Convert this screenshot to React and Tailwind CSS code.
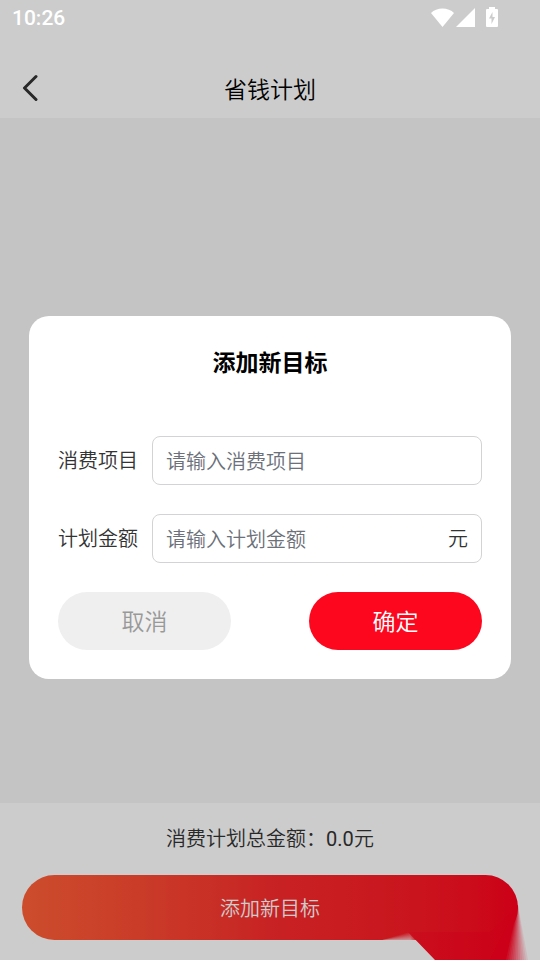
const SANS = "font-['Noto_Sans_CJK_SC',sans-serif]";

function StatusBar() {
  return (
    <div className="relative z-20 flex h-[38px] items-center justify-between pl-3 pr-10 text-white">
      <span className="font-[Roboto] text-[21px] font-medium">10:26</span>
      <svg className="h-6 w-[70px]" viewBox="0 0 70 24" fill="currentColor" aria-hidden="true">
        <path d="M1 6C6.500 0 18.500 0 24 6L12.500 20Z" />
        <path d="M26 20L45 1V20Z" />
        <path
          fillRule="evenodd"
          d="M59 0h6v2h2a1 1 0 0 1 1 1v16a1 1 0 0 1-1 1H57a1 1 0 0 1-1-1V3a1 1 0 0 1 1-1h2ZM62.500 5L59 11.500h2.500v5.500L65 10h-2.500Z"
        />
      </svg>
    </div>
  );
}

function Field({ id, label, placeholder, unit }) {
  return (
    <div className="flex items-center gap-[14px]">
      <label htmlFor={id} className="shrink-0 text-xl text-[#333333]">
        {label}
      </label>
      <div className="flex h-[49px] min-w-0 flex-1 items-center rounded-lg border border-[#d3d3d5] px-[13px]">
        <input
          id={id}
          type="text"
          placeholder={placeholder}
          className="h-full min-w-0 flex-1 bg-transparent text-xl text-[#333333] outline-none placeholder:text-[#6b7079]"
        />
        {unit && <span className="text-xl text-[#333333]">{unit}</span>}
      </div>
    </div>
  );
}

function AddGoalDialog() {
  return (
    <div className="absolute inset-0 z-10 flex items-center justify-center bg-black/20 px-[29px] pt-[34px]">
      <form
        role="dialog"
        aria-labelledby="dialog-title"
        className="w-full rounded-[20px] bg-white p-[29px]"
        onSubmit={(event) => event.preventDefault()}
      >
        <h2 id="dialog-title" className="text-center text-[23px] leading-8 font-bold text-black">
          添加新目标
        </h2>
        <div className="mt-[59px] flex flex-col gap-[29px]">
          <Field id="item" label="消费项目" placeholder="请输入消费项目" />
          <Field id="amount" label="计划金额" placeholder="请输入计划金额" unit="元" />
          <div className="flex justify-between">
            <button type="button" className="h-[58px] w-[173px] rounded-full bg-[#efefef] text-[23px] text-[#999999]">
              取消
            </button>
            <button type="submit" className="h-[58px] w-[173px] rounded-full bg-[#fd071e] text-[23px] text-white">
              确定
            </button>
          </div>
        </div>
      </form>
    </div>
  );
}

const STEPS = Array.from({ length: 12 }, (_, i) => i);

function RibbonTail() {
  return (
    <svg className="absolute right-0 bottom-0 h-[60px] w-40" viewBox="0 0 160 60" aria-hidden="true">
      <defs>
        <linearGradient id="tail" gradientUnits="userSpaceOnUse" x1="30" y1="0" x2="138" y2="0">
          <stop offset="0" stopColor="#fd1325" />
          <stop offset="1" stopColor="#ff001e" />
        </linearGradient>
      </defs>
      {STEPS.map((i) => (
        <path key={i} d={`M2 40L30 ${32 + i}L44 50L30 50Z`} fill="#ffffff" fillOpacity={1 / (12 - i)} />
      ))}
      <path d="M28 32H110L138 5L124 60H55Z" fill="url(#tail)" />
      {STEPS.map((i) => (
        <path key={i} d={`M138 5L${148 - i * 2} 60H110Z`} fill="#ff0220" fillOpacity={1 / (12 - i)} />
      ))}
    </svg>
  );
}

export default function App() {
  return (
    <div className={`relative flex min-h-screen flex-col bg-[#f6f6f6] font-[350] ${SANS}`}>
      <header className="bg-white">
        <StatusBar />
        <div className="grid h-20 grid-cols-[60px_1fr_60px] items-center pt-5">
          <button type="button" aria-label="返回" className="flex h-full items-center pl-[22px] text-[#333333]">
            <svg className="h-7 w-4" viewBox="0 0 16 28" fill="none" stroke="currentColor" strokeWidth="3" aria-hidden="true">
              <path d="M14 2.500L2.500 14L14 25.500" strokeLinecap="round" strokeLinejoin="round" />
            </svg>
          </button>
          <h1 className="text-center text-[23px] font-[350] text-black">省钱计划</h1>
        </div>
      </header>
      <main className="flex-1" />
      <footer className="relative bg-white px-[22px] pt-5 pb-5">
        <p className="text-center text-xl leading-[30px] text-[#333333]">
          消费计划总金额：<span className="font-[Roboto] font-normal">0.0</span>元
        </p>
        <button
          type="button"
          className="mt-[21px] h-[65px] w-full rounded-full bg-linear-to-r from-[#ff6038] via-[#fa2b2d] to-[#ff001e] text-xl text-white"
        >
          添加新目标
        </button>
        <RibbonTail />
      </footer>
      <AddGoalDialog />
    </div>
  );
}
